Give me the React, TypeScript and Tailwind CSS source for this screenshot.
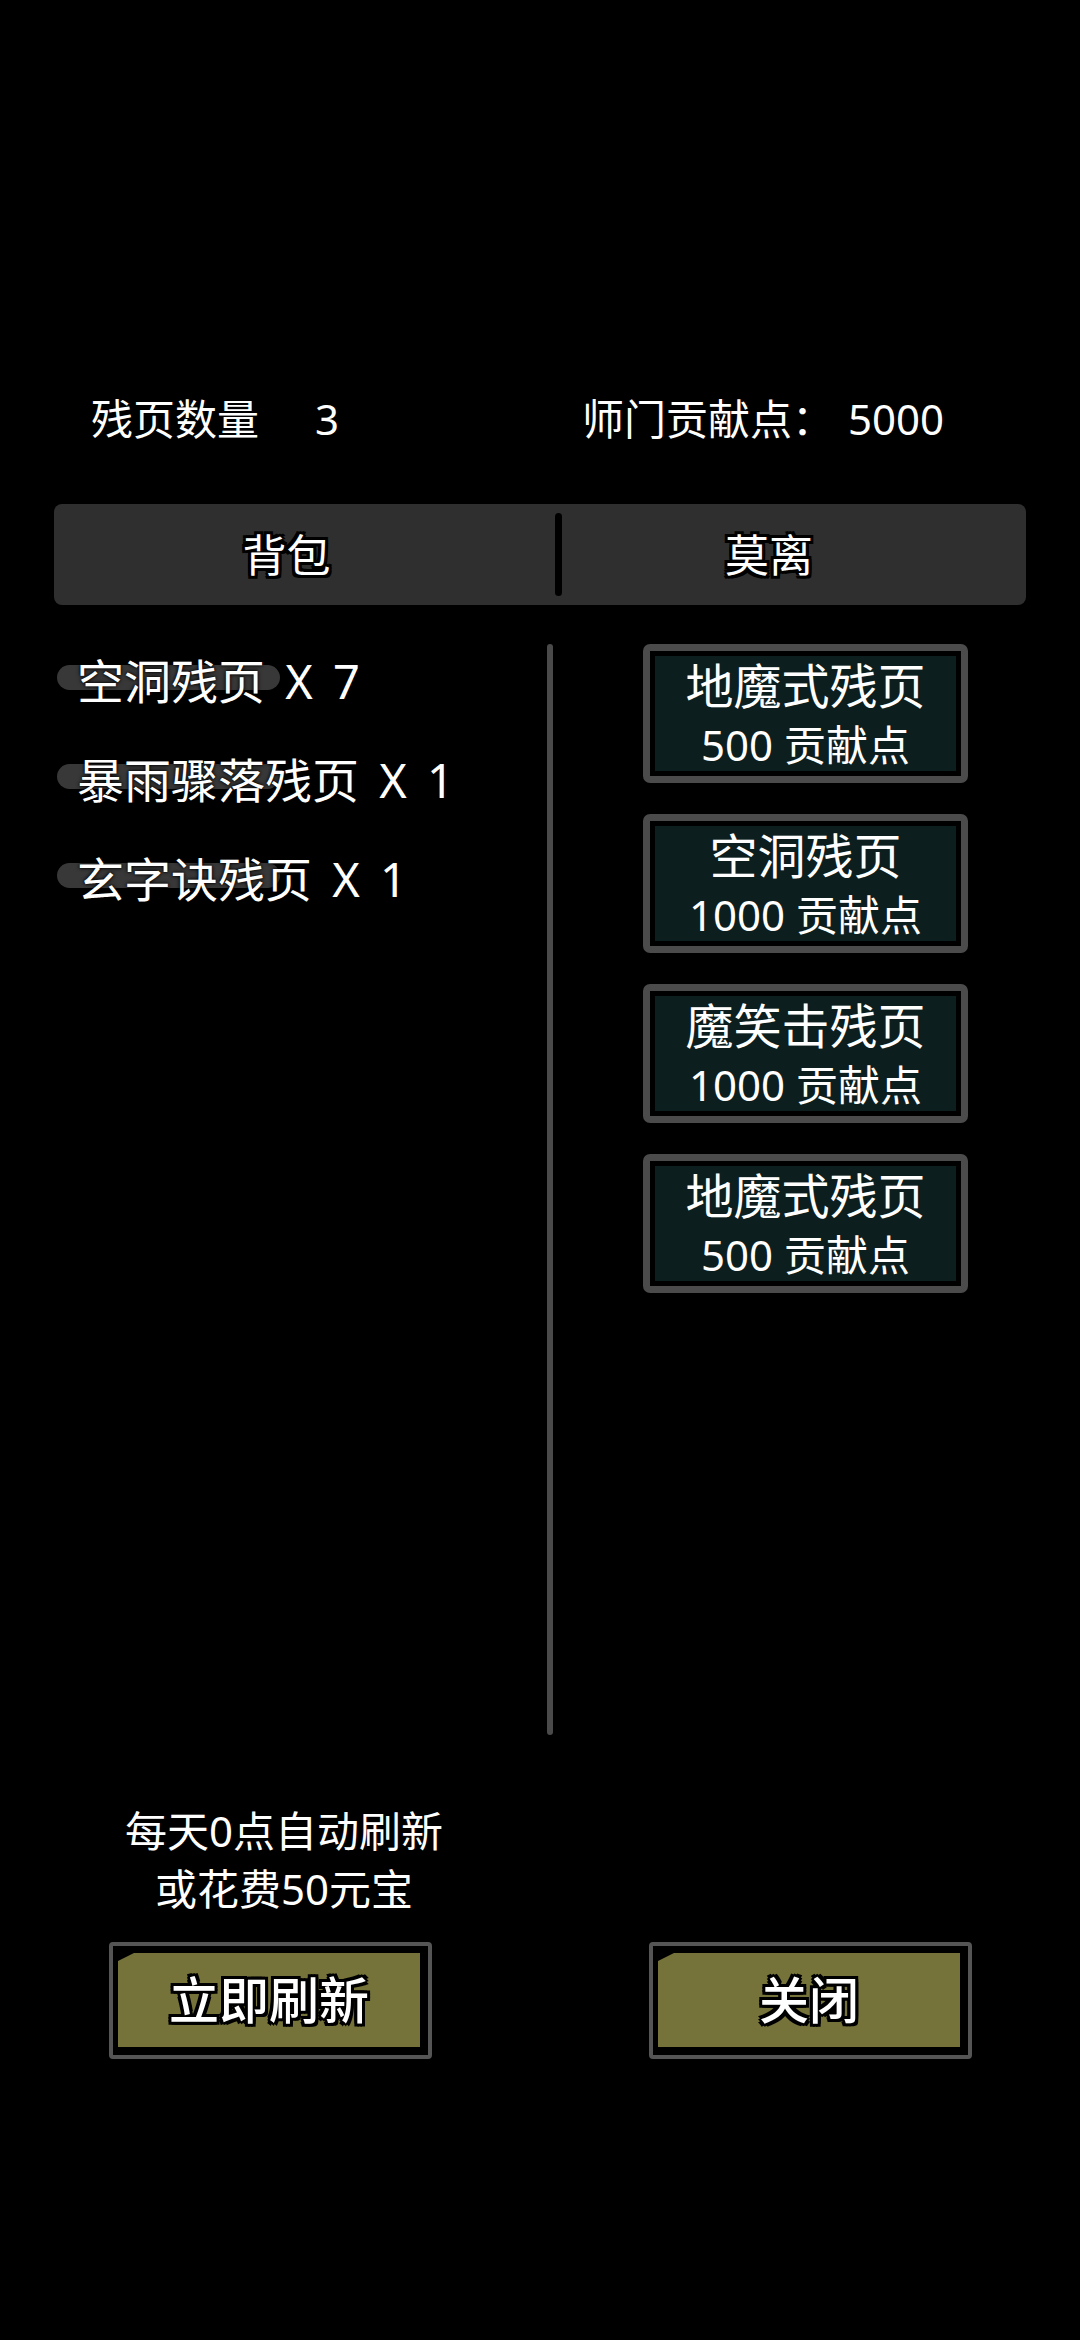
import React from "react"

const stroke =
  "[text-shadow:-3px_-3px_0_#000,3px_-3px_0_#000,-3px_3px_0_#000,3px_3px_0_#000,0_3px_0_#000,0_-3px_0_#000,3px_0_0_#000,-3px_0_0_#000]"

const bag = [
  { name: "空洞残页", count: 7 },
  { name: "暴雨骤落残页", count: 1 },
  { name: "玄字诀残页", count: 1 },
]

const shop = [
  { name: "地魔式残页", cost: 500 },
  { name: "空洞残页", cost: 1000 },
  { name: "魔笑击残页", cost: 1000 },
  { name: "地魔式残页", cost: 500 },
]

function OliveButton({ label }: { label: string }) {
  return (
    <button className="h-[117px] w-[323px] rounded-[4px] border-[4px] border-[#555555] bg-black pt-[7px] pl-[5px] pr-[8px] pb-[8px]">
      <div className="flex h-full w-full items-center justify-center bg-[#76733a] [clip-path:polygon(16px_0,100%_0,100%_100%,0_100%,0_8px)]">
        <span className={`text-[50px] leading-[60px] font-medium text-white ${stroke}`}>{label}</span>
      </div>
    </button>
  )
}

export default function App() {
  return (
    <div className="min-h-[2340px] w-[1080px] bg-black pt-[394px] font-['Noto_Sans','Noto_Sans_CJK_SC',sans-serif] text-white">
      {/* Header */}
      <div className="flex text-[42px] leading-[50px]">
        <div className="flex w-[582px] pl-[91px]">
          <span>残页数量</span>
          <span className="ml-[56px]">3</span>
        </div>
        <div className="flex">
          <span>师门贡献点：</span>
          <span className="ml-[14px]">5000</span>
        </div>
      </div>

      {/* Tabs */}
      <div className="mx-[54px] mt-[60px] flex h-[101px] items-center rounded-[8px] bg-[#2f2f2f]">
        <div className="flex w-[501px] justify-center pr-[36px]">
          <span className={`text-[44px] leading-[56px] ${stroke}`}>背包</span>
        </div>
        <div className="h-[83px] w-[7px] rounded-full bg-black" />
        <div className="flex flex-1 justify-center pr-[50px]">
          <span className={`text-[44px] leading-[56px] ${stroke}`}>莫离</span>
        </div>
      </div>

      {/* Content */}
      <div className="mt-[39px] flex h-[1091px]">
        <div className="flex w-[547px] flex-col gap-[43px] pt-[9px]">
          {bag.map((item) => (
            <div key={item.name} className="relative h-[56px]">
              <div className="absolute left-[57px] top-[12px] h-[25px] w-[223px] rounded-full bg-[#383838]" />
              <span className="relative ml-[77px] whitespace-pre text-[47px] leading-[56px] [word-spacing:8px] [text-shadow:0_0_4px_#000,0_0_2px_#000]">
                {`${item.name} X ${item.count}`}
              </span>
            </div>
          ))}
        </div>
        <div className="h-full w-[6px] rounded-full bg-[#4a4a4a]" />
        <div className="ml-[90px] flex flex-col gap-[31px]">
          {shop.map((item, i) => (
            <div
              key={i}
              className="h-[139px] w-[325px] rounded-[7px] border-[7px] border-[#4b4b4b] bg-black p-[5px]"
            >
              <div className="flex h-full flex-col items-center justify-center bg-[#0c1e1e]">
                <span className="text-[48px] leading-[58px]">{item.name}</span>
                <span className="mt-[5px] text-[42px] leading-[50px]">{item.cost} 贡献点</span>
              </div>
            </div>
          ))}
        </div>
      </div>

      {/* Refresh info */}
      <div className="mt-[67px] w-[568px] text-center text-[42px] leading-[58px]">
        <div>每天0点自动刷新</div>
        <div>或花费50元宝</div>
      </div>

      {/* Buttons */}
      <div className="mt-[24px] flex pl-[109px]">
        <OliveButton label="立即刷新" />
        <div className="ml-[217px]">
          <OliveButton label="关闭" />
        </div>
      </div>
    </div>
  )
}
